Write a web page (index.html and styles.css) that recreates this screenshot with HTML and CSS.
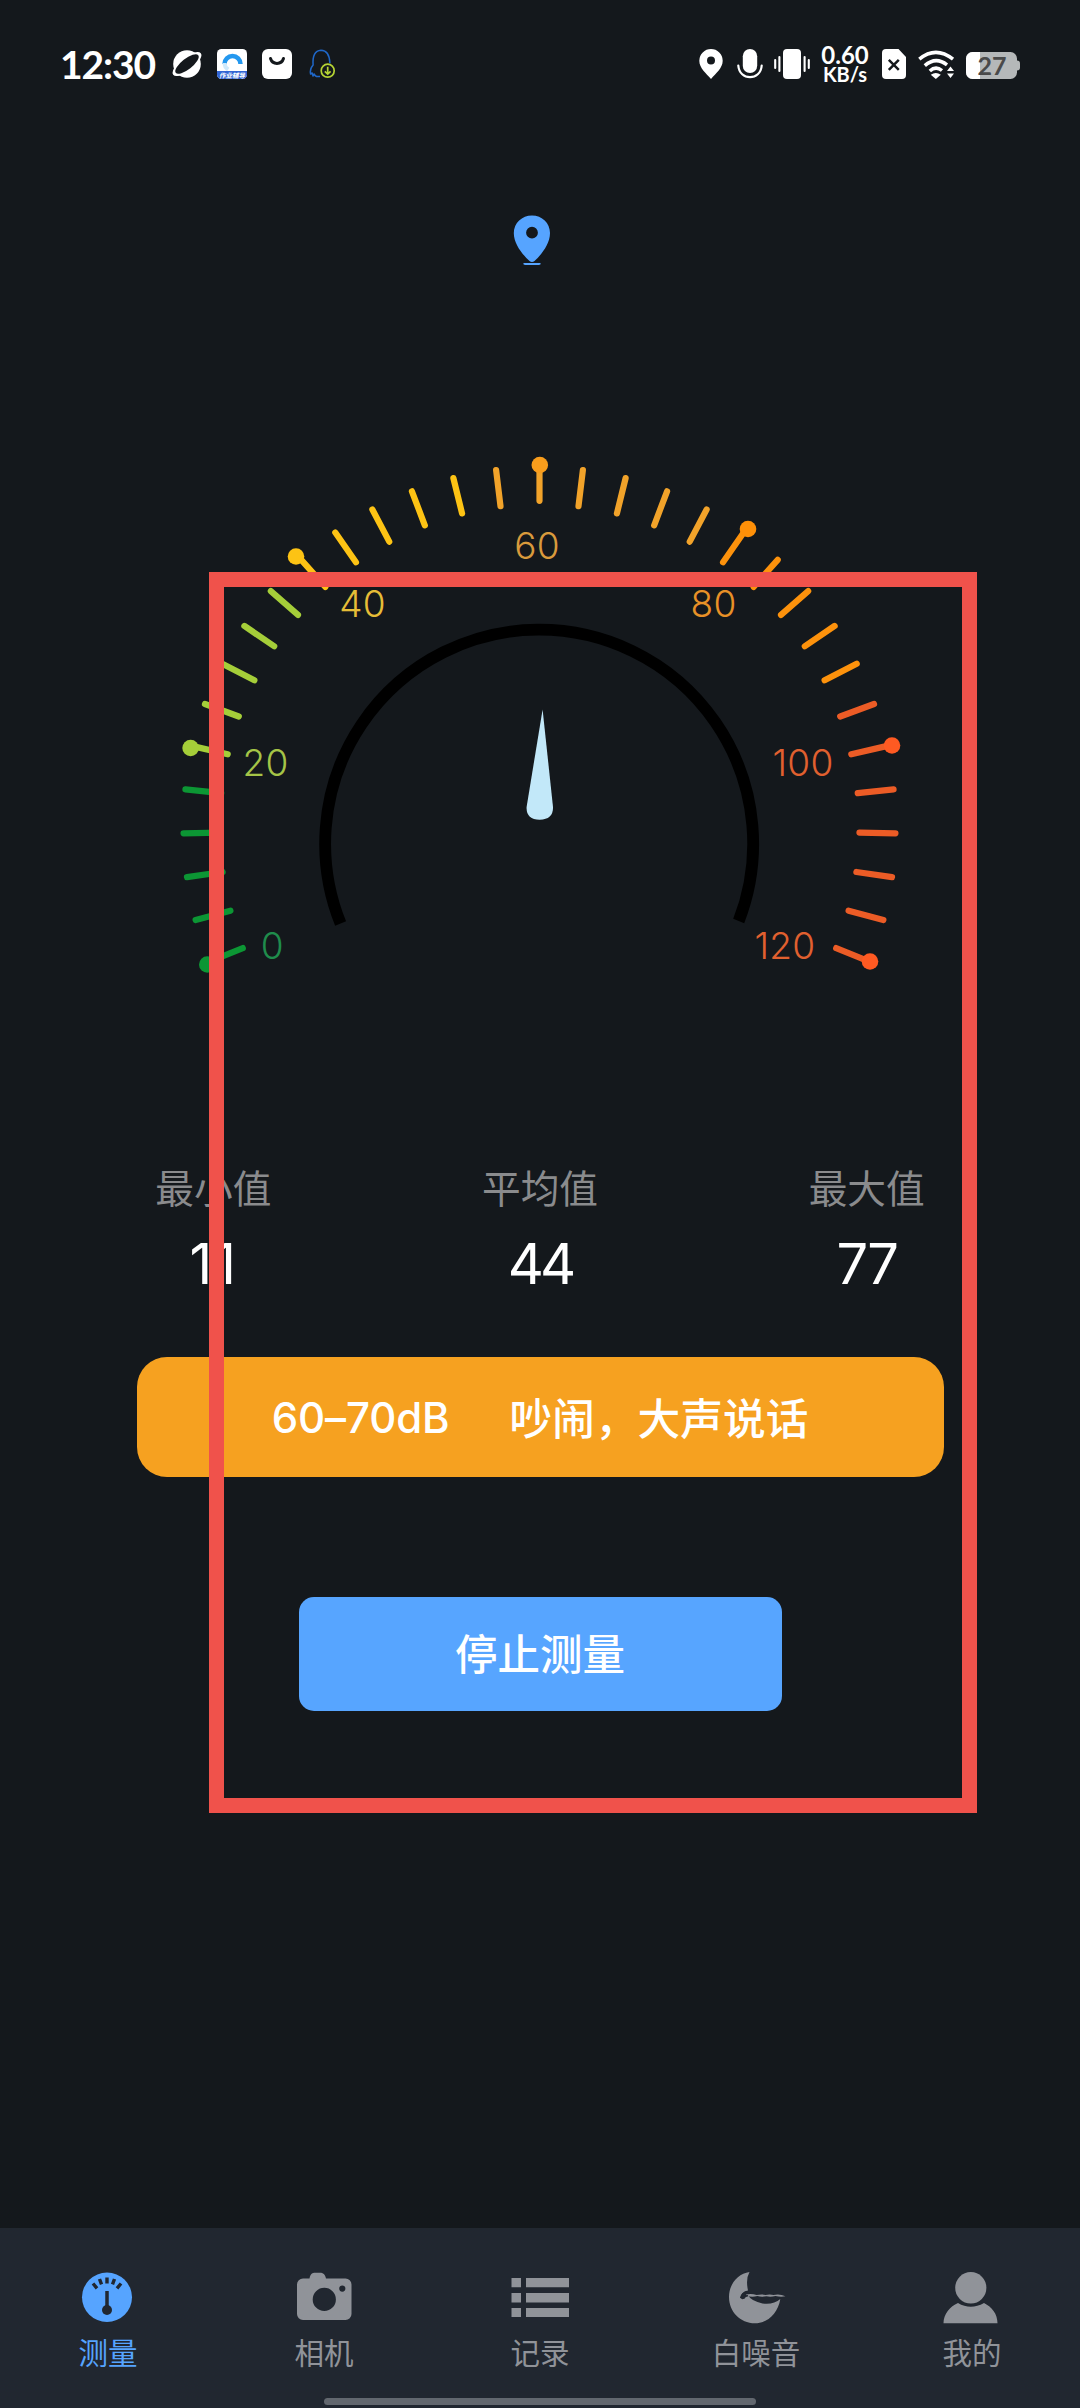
FILE: index.html
```html
<!DOCTYPE html>
<html lang="zh-CN">
<head>
<meta charset="utf-8">
<title>噪音测量</title>
<link rel="stylesheet" href="styles.css">
</head>
<body>
<div class="screen">
  <header class="status">
    <div class="status-left">
      <span class="clock">12:30</span>
      <svg width="30" height="30" viewBox="0 0 30 30">
        <circle cx="15" cy="15" r="13.8" fill="#fff"/>
        <ellipse cx="15" cy="15" rx="17.5" ry="6.800" transform="rotate(-38 15 15)" fill="#fff"/>
        <ellipse cx="15" cy="15" rx="14.3" ry="5.300" transform="rotate(-38 15 15)" fill="#14181c"/>
      </svg>
      <svg width="30" height="30" viewBox="0 0 30 30">
        <clipPath id="app"><rect width="30" height="30" rx="4.5"/></clipPath>
        <g clip-path="url(#app)">
          <rect width="30" height="30" fill="#fff"/>
          <path d="M7.5 15a8 8 0 1 1 16 0" fill="none" stroke="#2498ef" stroke-width="4.5"/>
          <path d="M7.6 14q-.2 4 3.6 6.500" fill="none" stroke="#cfe9fb" stroke-width="4"/>
          <path d="M0 22h30v8H0z" fill="#3265d4"/>
          <text class="app-tag" x="15" y="28.500" text-anchor="middle">作业辅导</text>
        </g>
      </svg>
      <svg width="30" height="30" viewBox="0 0 30 30">
        <rect width="30" height="30" rx="6" fill="#fff"/>
        <path d="M8.500 9.500c2 6.500 11 6.500 13 0" fill="none" stroke="#14181c" stroke-width="3" stroke-linecap="round"/>
      </svg>
      <svg class="qq" width="28" height="30" viewBox="0 0 28 30">
        <path d="M12 27.500H8.500q-2-1-2.300-2.500l-1.200 2-.8-3-1.600 1q-1-5 2.500-9-1-14 7.800-14.700 8.600.3 9 13" fill="none" stroke="#1f67c8" stroke-width="1.500" stroke-linejoin="round"/>
        <circle cx="19.700" cy="21.700" r="6.500" fill="#14181c" stroke="#b5d334" stroke-width="1.700"/>
        <path d="M19.700 17.800v7M16.800 22.300l2.900 2.800 2.900-2.800" fill="none" stroke="#b5d334" stroke-width="1.700"/>
      </svg>
    </div>
    <div class="status-right">
      <svg width="24" height="30" viewBox="0 0 24 30">
        <path fill="#fff" fill-rule="evenodd" d="M12 0A11.700 11.700 0 0 1 23.700 11.700C23.700 19 17 24 12 30 7 24 .3 19 .3 11.700A11.700 11.700 0 0 1 12 0zm0 7.500a4 4 0 1 0 0 8 4 4 0 0 0 0-8z"/>
      </svg>
      <svg class="mic" width="26" height="30" viewBox="0 0 26 30">
        <rect x="5.800" y="0" width="14.400" height="24" rx="7.200" fill="#fff"/>
        <path d="M1.300 16.500c1 15.500 22.400 15.500 23.400 0" fill="none" stroke="#fff" stroke-width="2.200" stroke-linecap="round"/>
      </svg>
      <svg class="vibrate" width="36" height="30" viewBox="0 0 36 30">
        <rect x="9" width="18" height="30" rx="4" fill="#fff"/>
        <path d="M1.200 11v8M5.400 8v14M30.600 8v14M34.800 11v8" stroke="#fff" stroke-width="2.100" stroke-linecap="round"/>
      </svg>
      <div class="speed"><span class="rate">0.60</span><span class="unit">KB/s</span></div>
      <svg class="sim" width="24" height="30" viewBox="0 0 24 30">
        <path d="M4 0h12.500L24 8v18a4 4 0 0 1-4 4H4a4 4 0 0 1-4-4V4a4 4 0 0 1 4-4z" fill="#fff"/>
        <path d="M6.800 10.800l10 10M16.800 10.800l-10 10" stroke="#14181c" stroke-width="2.500"/>
      </svg>
      <svg class="wifi" width="37" height="29" viewBox="0 0 37 29">
        <g fill="none" stroke="#fff" stroke-width="3.500">
          <path d="M1.300 9.200Q17.700-4.500 35 9.200"/>
          <path d="M6.800 15.600Q17.700 6 29 14.800"/>
          <path d="M11.800 21Q17.700 15.500 24 20.500"/>
        </g>
        <path d="M12.800 24.700q5-3.500 10 0L17.800 29z" fill="#fff"/>
        <path d="M29 21l3.500-4.500L36 21zM29 23.500h7L32.500 28z" fill="#fff"/>
      </svg>
      <svg class="battery" width="54" height="27" viewBox="0 0 54 27">
        <rect width="51" height="27" rx="6.500" fill="#b5b8b9"/>
        <path d="M51 8.500q3 0 3 3v4q0 3-3 3z" fill="#b5b8b9"/>
        <path d="M14 0v27H6.500A6.500 6.500 0 0 1 0 20.500v-14A6.500 6.500 0 0 1 6.500 0z" fill="#fff"/>
        <text class="battery-level" x="26" y="22.500" text-anchor="middle">27</text>
      </svg>
    </div>
  </header>

  <svg class="place" width="38" height="52" viewBox="0 0 38 52">
    <path fill="#56a4ff" fill-rule="evenodd" d="M19 .5C29 .5 37 8 37 18c0 11.500-9.500 22.500-15.500 28q-2.500 2-5 0C10.500 40.500.8 29.500.8 18 .8 8 9 .5 19 .5zm0 11.300a5.900 5.900 0 1 0 0 11.800 5.900 5.900 0 0 0 0-11.800z"/>
    <path d="M11 48h16q2 1.200-1 2H12q-3-.8-1-2z" fill="#56a4ff"/>
  </svg>

  <svg class="gauge" width="760" height="540" viewBox="160 440 760 540">
    <defs><path id="t" d="M0-356v36"/></defs>
    <g class="ticks" transform="translate(539.500 827) scale(1 1.01)">
      <g stroke="#0c9634">
        <use href="#t" transform="rotate(-112)"/>
        <use href="#t" transform="rotate(-105)"/>
        <use href="#t" transform="rotate(-98)"/>
        <use href="#t" transform="rotate(-91)"/>
        <use href="#t" transform="rotate(-84)"/>
      </g>
      <g stroke="#a5ce39">
        <use href="#t" transform="rotate(-77)"/>
        <use href="#t" transform="rotate(-70)"/>
        <use href="#t" transform="rotate(-63)"/>
        <use href="#t" transform="rotate(-56)"/>
        <use href="#t" transform="rotate(-49)"/>
      </g>
      <g stroke="#fdc314">
        <use href="#t" transform="rotate(-42)"/>
        <use href="#t" transform="rotate(-35)"/>
        <use href="#t" transform="rotate(-28)"/>
        <use href="#t" transform="rotate(-21)"/>
        <use href="#t" transform="rotate(-14)"/>
      </g>
      <g stroke="#f2a32a">
        <use href="#t" transform="rotate(-7)"/>
        <path d="M0-356v33"/>
        <use href="#t" transform="rotate(7)"/>
        <use href="#t" transform="rotate(14)"/>
        <use href="#t" transform="rotate(21)"/>
        <use href="#t" transform="rotate(28)"/>
      </g>
      <g stroke="#fd920c">
        <use href="#t" transform="rotate(35)"/>
        <use href="#t" transform="rotate(42)"/>
        <use href="#t" transform="rotate(49)"/>
        <use href="#t" transform="rotate(56)"/>
        <use href="#t" transform="rotate(63)"/>
      </g>
      <g stroke="#ec5c26">
        <use href="#t" transform="rotate(70)"/>
        <use href="#t" transform="rotate(77)"/>
        <use href="#t" transform="rotate(84)"/>
        <use href="#t" transform="rotate(91)"/>
        <use href="#t" transform="rotate(98)"/>
        <use href="#t" transform="rotate(105)"/>
        <use href="#t" transform="rotate(112)"/>
      </g>
    </g>
    <circle cx="207.300" cy="964.500" r="8.300" fill="#0c9634"/>
    <circle cx="190.600" cy="748" r="8.300" fill="#a5ce39"/>
    <circle cx="296" cy="556.500" r="8.300" fill="#fdc314"/>
    <circle cx="539.800" cy="465" r="8.300" fill="#f99d1c"/>
    <circle cx="748" cy="529" r="8.300" fill="#ff9008"/>
    <circle cx="892" cy="745.500" r="8.300" fill="#ff5a22"/>
    <circle cx="870" cy="961.500" r="8.300" fill="#ff5a22"/>
    <path d="M340.600 923.500A214 214 0 1 1 738.700 921" fill="none" stroke="#000" stroke-width="11.800"/>
    <path d="M542.600 709.500L553 807q.5 12.500-13.300 12.800Q526 819.500 526.600 807z" fill="#c2e8f9"/>
    <g class="scale" text-anchor="middle">
      <text x="272.300" y="958.700" fill="#1f8c4c">0</text>
      <text x="265.500" y="776" fill="#a5c447">20</text>
      <text x="362.600" y="617" fill="#e6bd37">40</text>
      <text x="537" y="559.300" fill="#d99a3c">60</text>
      <text x="713.600" y="617" fill="#e89127">80</text>
      <text x="803" y="776" fill="#e1602f">100</text>
      <text x="785" y="958.700" fill="#e1602f">120</text>
    </g>
  </svg>

  <section class="stats">
    <div class="stat"><span class="stat-name">最小值</span><span class="stat-value ones">11</span></div>
    <div class="stat"><span class="stat-name">平均值</span><span class="stat-value fours">44</span></div>
    <div class="stat"><span class="stat-name">最大值</span><span class="stat-value">77</span></div>
  </section>

  <div class="level"><span class="range">60–70dB</span><span class="feel">吵闹，大声说话</span></div>
  <button class="stop" type="button">停止测量</button>

  <nav class="tabs">
    <a class="tab active">
      <svg width="60" height="54" viewBox="0 0 60 54">
        <ellipse cx="29" cy="27.300" rx="25" ry="24.700" fill="#56a4ff"/>
        <g stroke="#212730" fill="none">
          <path d="M29 21v16" stroke-width="3.500"/>
          <path d="M29 7.500v6M21.500 9l2 5.300M36.500 9l-2 5.300M15 13.500l4 4.800M43 13.500l-4 4.800" stroke-width="3.400"/>
        </g>
        <circle cx="29" cy="40" r="5" fill="#212730"/>
      </svg>
      <span>测量</span>
    </a>
    <a class="tab">
      <svg width="60" height="54" viewBox="0 0 60 54">
        <path fill="#909399" fill-rule="evenodd" d="M9 8.500h6.500c1-5 3-5.800 5.500-5.800h5c3 0 5 1.500 6 5.800h19.500a6 6 0 0 1 6 6V44a6 6 0 0 1-6 6H9a6 6 0 0 1-6-6V14.500a6 6 0 0 1 6-6zM30.300 17.800a11.600 11.600 0 1 0 0 23.200 11.600 11.600 0 0 0 0-23.200zM48.300 15.500a3 3 0 1 0 0 6.200 3 3 0 0 0 0-6.200z"/>
      </svg>
      <span>相机</span>
    </a>
    <a class="tab">
      <svg width="60" height="54" viewBox="0 0 60 54">
        <path fill="#909399" d="M1.500 8h9.500v9.300H1.500zM16 8h43v9.300H16zM1.500 23h9.500v9.500H1.500zM16 23h43v9.500H16zM1.500 38h9.500v9H1.500zM16 38h43v9H16z"/>
      </svg>
      <span>记录</span>
    </a>
    <a class="tab">
      <svg width="60" height="54" viewBox="0 0 60 54">
        <path fill="#909399" d="M23.500 2Q19.500 9 22 20.500q-7 1-7.500 7.500 1.500 2 4 .5 1-3 4-2.500 3 5 14 7.500 11 1.500 17.800-4.500C52 43 42 53.300 29 53.300 14 53.300 3 41.500 3 27 3 14 12 3.500 23.500 2z"/>
        <path d="M20 24.500q6-1 10.500.6 5-1.300 9-.2 5-1 8 .2 6-1.500 12 1.200-5 .8-10-.3-5 1.200-9 .3-5 1-9-.2-6 1.300-11-.3z" fill="#909399"/>
        <path d="M14.600 28q1.200-5.500 6.500-5.500 2.800.2 3.500 1M18 28.300q1-3 4-2.500" fill="none" stroke="#212730" stroke-width="1.300"/>
      </svg>
      <span>白噪音</span>
    </a>
    <a class="tab">
      <svg width="60" height="54" viewBox="0 0 60 54">
        <ellipse cx="28.800" cy="17.800" rx="15.600" ry="15.800" fill="#909399"/>
        <path d="M16 33q12.500 7.500 26 0c8 4 13.500 11 13.500 20.300H1.500C1.500 44 8 36.500 16 33z" fill="#909399"/>
      </svg>
      <span>我的</span>
    </a>
  </nav>
  <div class="home-bar"></div>
  <div class="highlight"></div>
</div>
</body>
</html>
```
FILE: styles.css
```css
* { box-sizing: border-box; }
body { margin: 0; background: #14181c; }
svg { display: block; flex: none; }

.screen {
  position: relative;
  width: 1080px;
  height: 2408px;
  display: flex;
  flex-direction: column;
  align-items: center;
  background: #14181c;
  color: #fff;
  font-family: Inter, "Noto Sans CJK SC", sans-serif;
  overflow: hidden;
}

.status {
  width: 100%;
  height: 128px;
  padding: 0 60px;
  display: flex;
  justify-content: space-between;
  align-items: center;
  font-family: Lato, sans-serif;
  font-weight: 700;
}
.status-left, .status-right { display: flex; align-items: center; }
.status-left { gap: 15px; }
.clock { width: 97px; font-size: 39px; line-height: 48px; letter-spacing: -1.1px; white-space: nowrap; }
.app-tag { font: italic 700 6.5px "Noto Sans CJK SC", sans-serif; fill: #fff; }
.qq { margin-left: 1px; }
.mic { margin-left: 14px; }
.vibrate { margin-left: 11px; }
.speed {
  width: 52px;
  margin-left: 9px;
  display: flex;
  flex-direction: column;
  align-items: center;
}
.rate { font-size: 24px; line-height: 20px; }
.unit { font-size: 20px; line-height: 19px; }
.sim { margin-left: 11px; }
.wifi { margin-left: 12px; }
.battery { margin-left: 11px; margin-top: 3px; overflow: visible; }
.battery-level { font: 700 25px Lato, sans-serif; fill: #4a4a4a; }

.place { margin: 87px 17px 0 0; }
.gauge { margin-top: 173px; }
.ticks { fill: none; stroke-width: 6.2; stroke-linecap: round; }
.scale { font-size: 37px; font-weight: 300; letter-spacing: 0.3px; }

.stats {
  width: 980px;
  margin-top: 181px;
  display: grid;
  grid-template-columns: repeat(3, 1fr);
}
.stat { display: flex; flex-direction: column; align-items: center; }
.stat-name { font-size: 38.7px; line-height: 56px; color: #8a8b8d; }
.stat-value { margin-top: 12px; font-size: 56px; line-height: 70px; letter-spacing: -2px; }
.ones { letter-spacing: 1px; }
.fours { letter-spacing: -4px; }

.level {
  width: 807px;
  height: 120px;
  margin-top: 58px;
  display: flex;
  justify-content: center;
  align-items: center;
  gap: 60px;
  border-radius: 30px;
  background: #f6a120;
}
.range { font-size: 42px; font-weight: 500; letter-spacing: -0.1px; }
.feel { padding-bottom: 3px; font-size: 42.7px; font-weight: 500; }

.stop {
  width: 483px;
  height: 114px;
  margin-top: 120px;
  padding: 0 0 5px;
  border: 0;
  border-radius: 15px;
  background: #57a5ff;
  color: #fff;
  font: 500 42.5px Inter, "Noto Sans CJK SC", sans-serif;
}

.tabs {
  width: 100%;
  height: 180px;
  margin-top: auto;
  padding-top: 42px;
  flex: none;
  display: grid;
  grid-template-columns: repeat(5, 1fr);
  background: #212730;
}
.tab {
  display: flex;
  flex-direction: column;
  align-items: center;
  color: #909399;
  font-size: 29.5px;
}
.tab span { margin-top: 7px; line-height: 44px; }
.tab.active { color: #56a4ff; }

/* system gesture bar over the tab bar */
.home-bar {
  position: absolute;
  left: 324px;
  bottom: 3px;
  width: 432px;
  height: 7px;
  border-radius: 4px;
  background: #62676e;
}
/* guide frame over the screen */
.highlight {
  position: absolute;
  left: 209px;
  top: 572px;
  width: 768px;
  height: 1241px;
  border: 15.500px solid #f0524b;
}
```
